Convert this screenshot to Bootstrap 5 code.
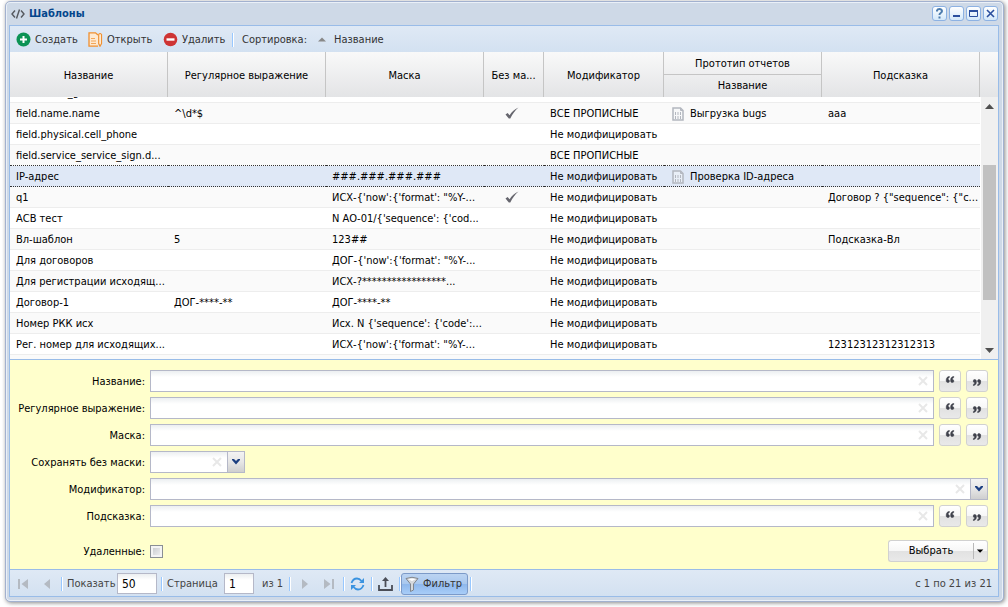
<!DOCTYPE html>
<html lang="ru">
<head>
<meta charset="utf-8">
<meta name="viewport" content="width=device-width, initial-scale=1">
<title>Шаблоны</title>
<link href="https://cdn.jsdelivr.net/npm/bootstrap@5.3.0/dist/css/bootstrap.min.css" rel="stylesheet">
<style>
body { font: 11px/14px "DejaVu Sans Condensed", "DejaVu Sans", sans-serif; color: #000; background: #fff; }
button, input, select { font: inherit; color: inherit; }
svg { display: block; flex: none; }
.app { height: 100vh; min-height: 480px; padding: 1px 4px 5px 5px; }
.win { height: 100%; border: 1px solid #a2b1cf; border-radius: 5px; background: #ced9e7; padding: 0 4px 4px 3px; box-shadow: 0 0 0 1px #eaf0f8 inset, 1px 1px 4px #888; }
.titlebar { height: 23px; padding: 0 1px 0 2px; flex: none; }
.titlebar h1 { font-size: 11px; font-weight: bold; line-height: 14px; color: #04468c; }
.tool { width: 15px; height: 15px; padding: 0; border: 1px solid #8db2e3; border-radius: 3px; background: linear-gradient(#fff, #d3e8fa); }
.tools { gap: 2px; }
.pane { border: 1px solid #99bce8; min-height: 0; flex: 1 1 0; }
.bar { background: linear-gradient(#dfe9f5, #d3e1f1); color: #333; flex: none; }
.bar-top { height: 26px; padding: 1px 0 0 6px; }
.bar-top button, .flat { border: 0; background: none; padding: 0; text-align: left; white-space: nowrap; }
.sep { width: 2px; height: 14px; border-left: 1px solid #98c8ff; border-right: 1px solid #fff; flex: none; }
.w-create { width: 72px; } .w-open { width: 75px; } .w-del { width: 69px; } .w-sort { width: 76px; }

.grid-zone { min-height: 0; background: #fff; flex: 1 1 0; }
.grid-view { overflow: hidden; min-width: 0; }
.grid-view table { width: 100%; table-layout: fixed; border-collapse: separate; border-spacing: 0; }
.c-flag { width: 60px; } .c-mod { width: 120px; }
.grid-view th { position: sticky; top: 0; z-index: 1; padding: 2px 0 0; height: 45px; text-align: center; vertical-align: middle; font-weight: normal; border-right: 1px solid #c5c5c5; background: linear-gradient(#f9f9f9, #e3e4e6) 0 0 / 100% 45px; }
.grid-view th.grp { height: 23px; border-bottom: 1px solid #c5c5c5; }
.grid-view th.sub { top: 23px; height: 22px; padding: 0; background-position: 0 100%; }
.grid-view td { height: 21px; padding: 2px 0 0 6px; line-height: 18px; white-space: nowrap; overflow: hidden; border-bottom: 1px solid #ededed; }
.grid-view td:nth-child(4) { padding: 0 4px 0 0; }
.grid-view tbody tr:nth-child(even) td { background: #fafafa; }
.grid-view tbody tr.before td { border-bottom: 1px dotted #333; }
.grid-view tbody tr.sel td { background: #dfe8f6; border-bottom: 1px dotted #333; }
.rep { gap: 6px; padding-left: 2px; }
.side { width: 18px; flex: none; }
.side-head { height: 45px; background: linear-gradient(#f9f9f9, #e3e4e6); flex: none; }
.track { margin-left: 1px; background: #f0f0f0; min-height: 0; padding: 7px 2px 6px; }
.thumb { width: 13px; height: 135px; background: #c1c1c1; margin-top: 56px; flex: none; }

.filter { background: #ffc; border-top: 1px solid #99bce8; border-bottom: 1px solid #99bce8; padding: 10px 10px 7px 0; flex: none; }
.f-row { height: 22px; margin-bottom: 5px; }
.f-row > label { width: 135px; flex: none; text-align: right; margin-right: 5px; padding-top: 1px; white-space: nowrap; }
.f-in { width: 100%; height: 22px; border: 1px solid #b5b8c8; border-radius: 0; padding: 0 22px 0 4px; appearance: none; background: linear-gradient(#eceff1, #fff 6px); display: block; }
.clear { position: absolute; right: 6px; top: 6px; border: 0; background: none; padding: 0; }
.combo .clear { right: 23px; }
.trigger { position: absolute; right: 0; top: 0; width: 18px; height: 22px; border: 1px solid #b5b8c8; background: linear-gradient(#f3f3f3, #e6e6e6 50%, #cfcfcf); pointer-events: none; padding: 6px 0 0 3px; }
.combo-s { width: 95px; }
.btn-g { border: 1px solid #d1d1d1; border-radius: 3px; background: linear-gradient(#fff, #f7f7f7 48%, #e2e2e2 52%, #e9e9e9); height: 22px; padding: 0; }
.btn-q { width: 22px; margin-left: 5px; flex: none; padding-bottom: 4px; }
.btn-q svg { margin: auto; }
.btn-q + .btn-q { padding: 2px 0 0; }
.f-last { margin: 13px 0 0; }
.check { appearance: none; width: 13px; height: 13px; margin: 0; border: 1px solid #8a8f94; background: linear-gradient(135deg, #c3c6ca, #f6f6f6); box-shadow: 0 0 0 2px #f4f4f4 inset; }
.btn-main { width: 85px; border-radius: 3px 0 0 3px; border-right: 0; }
.btn-drop { width: 15px; border-radius: 0 3px 3px 0; border-left: 0; }
.btn-drop svg { border-left: 1px solid #b9b9b9; }

.bar-foot { height: 26px; padding: 1px 6px 0 1px; color: #444; }
.pg { height: 21px; border: 1px solid #b5b8c8; padding: 0 4px; font-size: 12px; color: #000; background: linear-gradient(#eceff1, #fff 6px); border-radius: 0; }
.pg-a { width: 40px; } .pg-b { width: 30px; }
.slot { width: 24px; flex: none; } .slot svg { margin: auto; }
.gap-s { margin-left: 2px; }
.t-show { width: 50px; } .t-page { width: 57px; } .t-of { width: 27px; }
.btn-filter { height: 22px; width: 67px; border: 1px solid #7c9ac8; border-radius: 3px; background: linear-gradient(#bcd4f2, #a9c8ee 48%, #8fb8ec 52%, #a8cdf8); padding: 0 0 0 3px; color: #333; }
</style>
</head>
<body>
<svg width="0" height="0" class="position-absolute" aria-hidden="true">
  <symbol id="x" viewBox="0 0 10 10"><path d="M1 1l8 8M9 1L1 9" stroke="#e8e8e8" stroke-width="2"/></symbol>
  <symbol id="chev" viewBox="0 0 10 8"><path d="M1 1h2l2 2 2-2h2v1L5 6.500 1 2z" fill="#1c3f80"/></symbol>
  <symbol id="ql" viewBox="0 0 10 8"><path d="M4.300.3C2 .8.600 2.200.600 4.800.600 6.500 1.300 7.500 2.600 7.500c1.100 0 1.800-.7 1.800-1.800S3.700 4 2.700 4c0-1 .5-1.800 1.600-2.300zM9.300.3C7 .8 5.600 2.200 5.600 4.800c0 1.700.7 2.700 2 2.700 1.100 0 1.800-.7 1.800-1.800S8.700 4 7.700 4c0-1 .5-1.800 1.600-2.300z" fill="#40424c" stroke="#40424c" stroke-width=".5"/></symbol>
  <symbol id="qr" viewBox="0 0 10 8"><use href="#ql" width="10" height="8" transform="rotate(180 5 4)"/></symbol>
  <symbol id="ok" viewBox="0 0 14 12"><path d="M.5 7.500L2.600 6l2 2.300C6.800 4.800 9.500 2.200 13.500.5 10 3.500 7.500 7 5.300 11.500H3.800z" fill="#66666e"/></symbol>
  <symbol id="doc" viewBox="0 0 12 14"><path d="M1 1h7.500L11 3.500V13H1z" fill="#f4f5f7" fill-opacity=".5" stroke="#b3b7bf" stroke-width="1.500"/><path d="M8.500 1v2.500H11" fill="none" stroke="#b3b7bf"/><path d="M3.500 5v3M6 5v3M8.500 5v3M3.500 9v3M6 9v3M8.500 9v3" stroke="#b3b7bf"/></symbol>
</svg>
<main class="app">
<section class="win d-flex flex-column">
  <header class="titlebar d-flex align-items-center">
    <svg width="14" height="10" viewBox="0 0 14 10"><path d="M4 1.500L1 5l3 3.500M10 1.500L13 5l-3 3.500M8.500.5l-3 9" fill="none" stroke="#55585e" stroke-width="1.400"/></svg>
    <h1 class="m-0 ms-1 flex-grow-1">Шаблоны</h1>
    <div class="tools d-flex">
      <button class="tool" aria-label="Справка"><svg width="13" height="13" viewBox="0 0 13 13"><path d="M4 4.500V3.500Q4.500 2 6.500 2T9 4q0 1.200-1.300 2T6.500 8M6.500 9.500v2" fill="none" stroke="#4d7cae" stroke-width="2"/></svg></button>
      <button class="tool" aria-label="Свернуть"><svg width="13" height="13" viewBox="0 0 13 13"><path d="M3 8h7v2H3z" fill="#2b4f9e"/></svg></button>
      <button class="tool" aria-label="Развернуть"><svg width="13" height="13" viewBox="0 0 13 13"><path d="M2.500 3.500h8v6h-8z" fill="none" stroke="#2b4f9e"/><path d="M2 3h9v2H2z" fill="#2b4f9e"/></svg></button>
      <button class="tool" aria-label="Закрыть"><svg width="13" height="13" viewBox="0 0 13 13"><path d="M3 3l7 7M10 3l-7 7" stroke="#2b4f9e" stroke-width="1.600"/></svg></button>
    </div>
  </header>

  <div class="pane d-flex flex-column">
    <div class="bar bar-top d-flex align-items-center">
      <button class="w-create d-flex align-items-center"><svg class="me-1" width="15" height="15" viewBox="0 0 15 15"><circle cx="7.500" cy="7.500" r="7" fill="#0c9355"/><path d="M7.500 4v7M4 7.500h7" stroke="#fff" stroke-width="2"/></svg>Создать</button>
      <button class="w-open d-flex align-items-center"><svg class="me-1" width="15" height="15" viewBox="0 0 15 15"><path d="M10 14.200H1V.8h6.500L10 3" fill="#fde9d2" stroke="#f09030" stroke-width="1.300"/><path d="M3 6.500h4M3 9h5M3 11.500h5" stroke="#f3a658"/><path d="M10.700 2.500q1.300-2 2.800 0v9L12 14.200l-1.300-2.700z" fill="#fff3e2" stroke="#f09030" stroke-width="1.200"/></svg>Открыть</button>
      <button class="w-del d-flex align-items-center"><svg class="me-1" width="15" height="15" viewBox="0 0 15 15"><circle cx="7.500" cy="7.500" r="6.800" fill="#ce3434"/><path d="M3.500 7.500h8" stroke="#fff" stroke-width="2.400"/></svg>Удалить</button>
      <span class="sep me-2"></span>
      <span class="w-sort text-nowrap">Сортировка:</span>
      <button class="d-flex align-items-center"><svg class="me-2" width="8" height="5" viewBox="0 0 8 5"><path d="M4 .5L8 4.500H0z" fill="#888"/></svg>Название</button>
    </div>

    <div class="grid-zone d-flex">
      <div class="grid-view flex-grow-1" id="view">
        <table>
          <colgroup><col><col><col><col class="c-flag"><col class="c-mod"><col><col></colgroup>
          <thead>
            <tr><th rowspan="2">Название</th><th rowspan="2">Регулярное выражение</th><th rowspan="2">Маска</th><th rowspan="2">Без ма...</th><th rowspan="2">Модификатор</th><th class="grp">Прототип отчетов</th><th rowspan="2">Подсказка</th></tr>
            <tr><th class="sub">Название</th></tr>
          </thead>
          <tbody>
            <tr><td>field.email_g</td><td></td><td></td><td></td><td></td><td></td><td></td></tr>
            <tr><td>field.name.name</td><td>^\d*$</td><td></td><td><svg class="mx-auto" width="14" height="12"><use href="#ok"/></svg></td><td>ВСЕ ПРОПИСНЫЕ</td><td><div class="rep d-flex align-items-center"><svg width="12" height="14"><use href="#doc"/></svg>Выгрузка bugs</div></td><td>aaa</td></tr>
            <tr><td>field.physical.cell_phone</td><td></td><td></td><td></td><td>Не модифицировать</td><td></td><td></td></tr>
            <tr class="before"><td>field.service_service_sign.d...</td><td></td><td></td><td></td><td>ВСЕ ПРОПИСНЫЕ</td><td></td><td></td></tr>
            <tr class="sel"><td>IP-адрес</td><td></td><td>###.###.###.###</td><td></td><td>Не модифицировать</td><td><div class="rep d-flex align-items-center"><svg width="12" height="14"><use href="#doc"/></svg>Проверка ID-адреса</div></td><td></td></tr>
            <tr><td>q1</td><td></td><td>ИСХ-{'now':{'format': "%Y-...</td><td><svg class="mx-auto" width="14" height="12"><use href="#ok"/></svg></td><td>Не модифицировать</td><td></td><td>Договор ? {"sequence": {"c...</td></tr>
            <tr><td>АСВ тест</td><td></td><td>N АО-01/{'sequence': {'cod...</td><td></td><td>Не модифицировать</td><td></td><td></td></tr>
            <tr><td>Вл-шаблон</td><td>5</td><td>123##</td><td></td><td>Не модифицировать</td><td></td><td>Подсказка-Вл</td></tr>
            <tr><td>Для договоров</td><td></td><td>ДОГ-{'now':{'format': "%Y-...</td><td></td><td>Не модифицировать</td><td></td><td></td></tr>
            <tr><td>Для регистрации исходящ...</td><td></td><td>ИСХ-?*****************...</td><td></td><td>Не модифицировать</td><td></td><td></td></tr>
            <tr><td>Договор-1</td><td>ДОГ-****-**</td><td>ДОГ-****-**</td><td></td><td>Не модифицировать</td><td></td><td></td></tr>
            <tr><td>Номер РКК исх</td><td></td><td>Исх. N {'sequence': {'code':...</td><td></td><td>Не модифицировать</td><td></td><td></td></tr>
            <tr><td>Рег. номер для исходящих...</td><td></td><td>ИСХ-{'now':{'format': "%Y-...</td><td></td><td>Не модифицировать</td><td></td><td>12312312312312313</td></tr>
            <tr><td></td><td></td><td></td><td></td><td></td><td></td><td></td></tr>
          </tbody>
        </table>
      </div>
      <div class="side d-flex flex-column">
        <div class="side-head"></div>
        <div class="track flex-grow-1 d-flex flex-column">
          <svg class="mx-auto" width="9" height="5" viewBox="0 0 9 5"><path d="M4.500 0L9 5H0z" fill="#505050"/></svg>
          <div class="thumb"></div>
          <svg class="mx-auto mt-auto" width="9" height="5" viewBox="0 0 9 5"><path d="M4.500 5L9 0H0z" fill="#505050"/></svg>
        </div>
      </div>
    </div>

    <form class="filter" onsubmit="return false">
      <div class="f-row d-flex align-items-center"><label for="f1">Название:</label><div class="position-relative flex-grow-1"><input class="f-in" id="f1"><button class="clear" aria-label="Очистить"><svg width="10" height="10"><use href="#x"/></svg></button></div><button class="btn-g btn-q" aria-label="Начинается с"><svg width="10" height="7"><use href="#ql"/></svg></button><button class="btn-g btn-q" aria-label="Заканчивается на"><svg width="10" height="7"><use href="#qr"/></svg></button></div>
      <div class="f-row d-flex align-items-center"><label for="f2">Регулярное выражение:</label><div class="position-relative flex-grow-1"><input class="f-in" id="f2"><button class="clear" aria-label="Очистить"><svg width="10" height="10"><use href="#x"/></svg></button></div><button class="btn-g btn-q" aria-label="Начинается с"><svg width="10" height="7"><use href="#ql"/></svg></button><button class="btn-g btn-q" aria-label="Заканчивается на"><svg width="10" height="7"><use href="#qr"/></svg></button></div>
      <div class="f-row d-flex align-items-center"><label for="f3">Маска:</label><div class="position-relative flex-grow-1"><input class="f-in" id="f3"><button class="clear" aria-label="Очистить"><svg width="10" height="10"><use href="#x"/></svg></button></div><button class="btn-g btn-q" aria-label="Начинается с"><svg width="10" height="7"><use href="#ql"/></svg></button><button class="btn-g btn-q" aria-label="Заканчивается на"><svg width="10" height="7"><use href="#qr"/></svg></button></div>
      <div class="f-row d-flex align-items-center"><label for="f4">Сохранять без маски:</label><div class="combo combo-s position-relative"><select class="f-in" id="f4"><option></option></select><button class="clear" aria-label="Очистить"><svg width="10" height="10"><use href="#x"/></svg></button><span class="trigger"><svg width="10" height="8"><use href="#chev"/></svg></span></div></div>
      <div class="f-row d-flex align-items-center"><label for="f5">Модификатор:</label><div class="combo position-relative flex-grow-1"><select class="f-in" id="f5"><option></option></select><button class="clear" aria-label="Очистить"><svg width="10" height="10"><use href="#x"/></svg></button><span class="trigger"><svg width="10" height="8"><use href="#chev"/></svg></span></div></div>
      <div class="f-row d-flex align-items-center"><label for="f6">Подсказка:</label><div class="position-relative flex-grow-1"><input class="f-in" id="f6"><button class="clear" aria-label="Очистить"><svg width="10" height="10"><use href="#x"/></svg></button></div><button class="btn-g btn-q" aria-label="Начинается с"><svg width="10" height="7"><use href="#ql"/></svg></button><button class="btn-g btn-q" aria-label="Заканчивается на"><svg width="10" height="7"><use href="#qr"/></svg></button></div>
      <div class="f-row f-last d-flex align-items-center"><label for="f7">Удаленные:</label><input type="checkbox" class="check" id="f7"><button class="btn-g btn-main ms-auto">Выбрать</button><button class="btn-g btn-drop" aria-label="Ещё"><svg width="14" height="16" viewBox="0 0 14 16"><path d="M3 6.500h7L6.500 10z" fill="#000"/></svg></button></div>
    </form>

    <footer class="bar bar-foot d-flex align-items-center">
      <button class="flat slot" aria-label="Первая"><svg width="12" height="12" viewBox="0 0 12 12"><path d="M1 1h2v10H1zM11 1v10L4.500 6z" fill="#b4bac2"/></svg></button>
      <button class="flat slot" aria-label="Предыдущая"><svg width="8" height="12" viewBox="0 0 8 12"><path d="M7 1v10L1 6z" fill="#b4bac2"/></svg></button>
      <span class="sep me-1 gap-s"></span>
      <label for="p1" class="t-show text-nowrap">Показать</label><input class="pg pg-a me-1" id="p1" value="50">
      <span class="sep me-1"></span>
      <label for="p2" class="t-page text-nowrap">Страница</label><input class="pg pg-b me-2" id="p2" value="1"><span class="t-of text-nowrap">из 1</span>
      <span class="sep"></span>
      <button class="flat slot gap-s" aria-label="Следующая"><svg width="8" height="12" viewBox="0 0 8 12"><path d="M1 1v10l6-5z" fill="#b4bac2"/></svg></button>
      <button class="flat slot" aria-label="Последняя"><svg width="12" height="12" viewBox="0 0 12 12"><path d="M1 1v10l6.500-5zM9 1h2v10H9z" fill="#b4bac2"/></svg></button>
      <span class="sep gap-s"></span>
      <button class="flat slot" aria-label="Обновить"><svg width="15" height="14" viewBox="0 0 15 14"><path d="M1.500 6Q3 1.500 7 1.500q2.500 0 4.500 2.500M13.500 8q-1.500 4.500-5.500 4.500-2.500 0-4.500-2.500" fill="none" stroke="#3a93e0" stroke-width="1.800"/><path d="M14 1V6H9zM1 13V8h5z" fill="#3a93e0"/></svg></button>
      <span class="sep gap-s"></span>
      <button class="flat slot" aria-label="Выгрузить"><svg width="15" height="14" viewBox="0 0 15 14"><path d="M1 8v5h13V8M7.500 10V2" fill="none" stroke="#4a4d57" stroke-width="1.800"/><path d="M7.500 0L11 4H4z" fill="#4a4d57"/></svg></button>
      <span class="sep gap-s"></span>
      <button class="btn-filter d-flex align-items-center text-nowrap"><svg class="me-1" width="14" height="16" viewBox="0 0 14 16"><path d="M1 2.500q6-2.500 12 0L8.500 8v6l-3 1.500V8z" fill="#d5d8dc" stroke="#7f858d"/><path d="M3 3q4-1 8 0L7 5z" fill="#fff"/></svg>Фильтр</button>
      <span class="sep gap-s"></span>
      <span class="ms-auto text-nowrap">с 1 по 21 из 21</span>
    </footer>
  </div>
</section>
</main>
<script src="https://cdn.jsdelivr.net/npm/bootstrap@5.3.0/dist/js/bootstrap.bundle.min.js"></script>
<script>
// start one row down the list
document.getElementById('view').scrollTop = 15;
</script>
</body>
</html>
